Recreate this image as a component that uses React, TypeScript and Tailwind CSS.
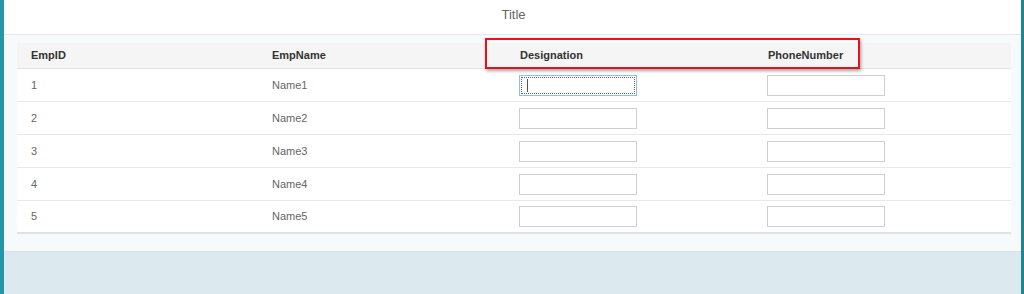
import React from 'react';

interface Employee {
  id: string;
  name: string;
}

const employees: Employee[] = [
  { id: '1', name: 'Name1' },
  { id: '2', name: 'Name2' },
  { id: '3', name: 'Name3' },
  { id: '4', name: 'Name4' },
  { id: '5', name: 'Name5' },
];

const columns = ['EmpID', 'EmpName', 'Designation', 'PhoneNumber'];

const TextBox: React.FC<{ focused?: boolean }> = ({ focused }) => (
  <div
    className={`relative w-[118px] h-[21px] bg-white border ${focused ? 'border-[#8cbfe0]' : 'border-[#cfcfcf]'}`}
  >
    {focused && (
      <>
        <div className="absolute inset-[1px] border border-dotted border-[#666]" />
        <div className="absolute left-[7px] top-[3px] w-px h-[13px] bg-[#555]" />
      </>
    )}
  </div>
);

const App: React.FC = () => {
  return (
    <div
      className="relative flex w-full h-[294px] overflow-hidden bg-[#dce9ee]"
      style={{ fontFamily: '"Liberation Sans", Arial, sans-serif' }}
    >
      <div className="w-[4px] bg-[#2596a5] shrink-0" />
      <div className="flex-1 flex flex-col">
        <div className="h-[35px] bg-white border-b border-[#e6e9eb] flex items-center justify-center">
          <span className="text-[13px] text-[#666] -mt-[4px] ml-[2px]">Title</span>
        </div>
        <div className="bg-[#f6fafb] pt-[8px] pb-[17px] pl-[13px] pr-[10px] border-b border-[#d6e4ea]">
          <div className="bg-white border-b-2 border-[#e2e2e2]">
            <div className="grid grid-cols-[241px_248px_248px_1fr] h-[26px] bg-[#f5f5f5] border-b border-[#e4e4e4] items-center">
              {columns.map((c) => (
                <div key={c} className="pl-[14px] text-[11px] font-bold text-[#333]">
                  {c}
                </div>
              ))}
            </div>
            {employees.map((emp, i) => {
              const last = i === employees.length - 1;
              return (
                <div
                  key={emp.id}
                  className={`grid grid-cols-[241px_248px_248px_1fr] items-center ${last ? 'h-[31px]' : 'h-[33px] border-b border-[#e8e8e8]'}`}
                >
                  <div className="pl-[14px] text-[11px] text-[#666]">{emp.id}</div>
                  <div className="pl-[14px] text-[11px] text-[#666]">{emp.name}</div>
                  <div className="pl-[13px]">
                    <TextBox focused={i === 0} />
                  </div>
                  <div className="pl-[13px]">
                    <TextBox />
                  </div>
                </div>
              );
            })}
          </div>
        </div>
        <div className="flex-1 bg-[#dce9ee]" />
      </div>
      <div className="w-[3px] bg-[#1f8593] shrink-0" />

      {/* annotation box */}
      <div className="absolute left-[485px] top-[38px] w-[375px] h-[31px] border-2 border-[#e8101a] shadow-[1px_2px_3px_rgba(0,0,0,0.35)]" />
    </div>
  );
};

export default App;
